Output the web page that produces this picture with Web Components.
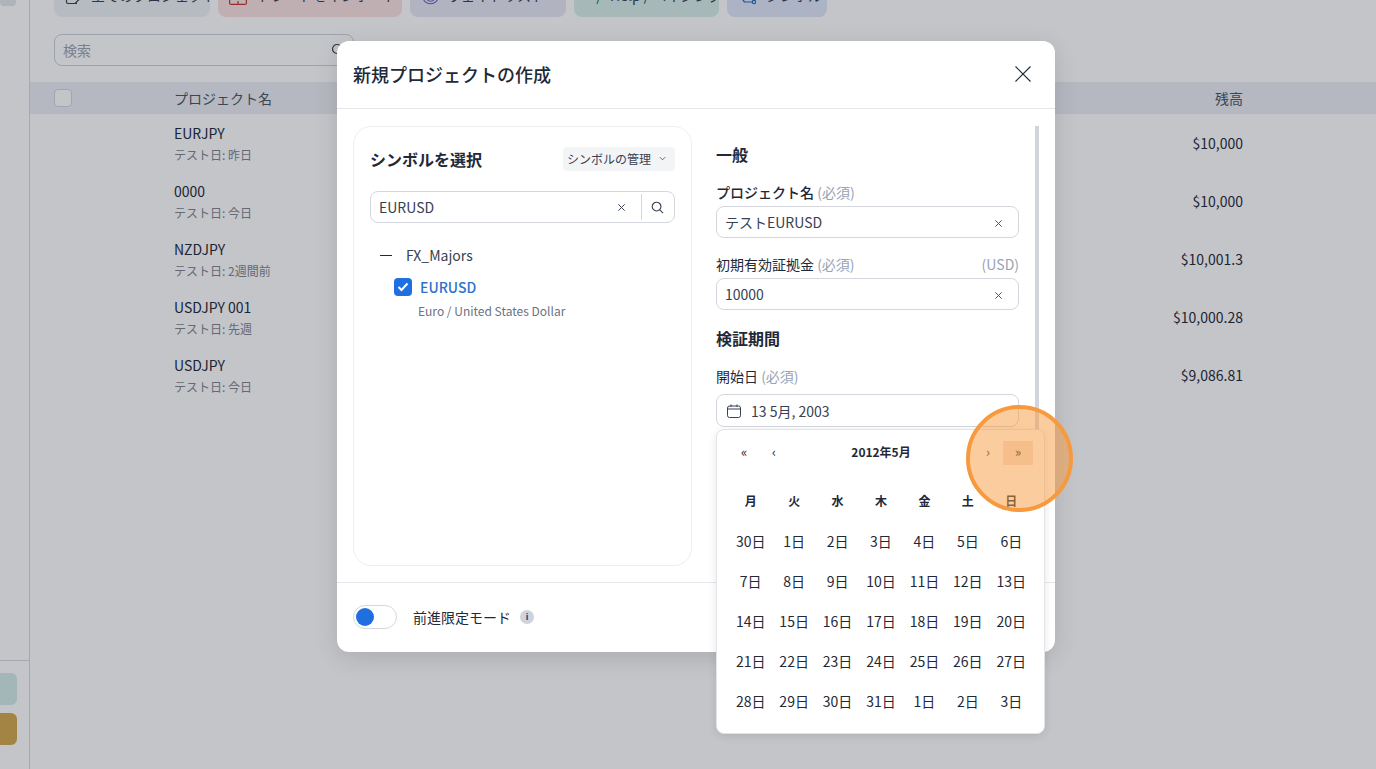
<!DOCTYPE html>
<html lang="ja"><head><meta charset="utf-8">
<style>
html,body{margin:0;padding:0;height:100%;overflow:hidden}
body{font-family:"Noto Sans CJK JP","Noto Sans",sans-serif;color:#1f2937;background:#fff}
</style></head><body>
<app-shell></app-shell>
<script>
const X='<svg viewBox="0 0 10 10" width="9" height="9" fill="none" stroke="currentColor" stroke-width="1.1"><path d="M1.5 1.5l7 7M8.5 1.5l-7 7"/></svg>';
function def(name,html,init){customElements.define(name,class extends HTMLElement{constructor(){super();this.attachShadow({mode:'open'}).innerHTML=typeof html==='function'?html(this):html;}connectedCallback(){init&&init(this);}});}

def('project-row',el=>`<style>:host{display:grid;grid-template-columns:144px 1fr auto;height:58px;padding-right:133px;box-sizing:border-box}
.n{font-size:14px;line-height:20px;color:#1f2937;margin-top:9px}.d{font-size:12px;line-height:18px;color:#808590;margin-top:3px}
.b{font-size:14px;line-height:20px;align-self:start;margin-top:19px;color:#1f2937}</style>
<div></div><div><div class="n">${el.getAttribute('name')}</div><div class="d">テスト日: ${el.getAttribute('date')}</div></div><div class="b">${el.getAttribute('bal')}</div>`);

def('top-button',el=>`<style>:host{display:flex;align-items:flex-end;gap:${el.getAttribute('gap')||8}px;box-sizing:border-box;height:40px;border-radius:0 0 8px 8px;font-size:14px;line-height:20px;color:#374151;padding:0 0 12px ${el.getAttribute('pl')||11}px;white-space:nowrap;overflow:hidden;background:${el.getAttribute('bg')};width:${el.getAttribute('w')}px}
::slotted(svg){display:block;flex:none;margin-bottom:0}</style><slot name="icon"></slot><slot></slot>`);

def('bg-page',`<style>:host{display:flex;height:769px;overflow:hidden}
aside{width:29px;border-right:1px solid #d6d8dc;flex:none;position:relative;display:flex;flex-direction:column;justify-content:flex-end}
.tick{height:6px;width:16px;background:#e5e7eb;border-radius:0 0 4px 4px;position:absolute;top:0;left:0}
.foot{border-top:1px solid #d6d8dc;height:109px;box-sizing:border-box;padding-top:12px;display:flex;flex-direction:column;gap:8px}
.sq{width:17px;height:32px;border-radius:0 6px 6px 0}
main{flex:1;min-width:0}
.btns{display:flex;gap:8px;padding-left:24px;margin-top:-23px}
.search{margin:17px 0 0 24px;width:300px;height:32px;box-sizing:border-box;border:1px solid #cbd0d8;border-radius:8px;display:flex;align-items:center;justify-content:space-between;padding:0 8px;font-size:14px;color:#9ca3af}
.head{margin-top:16px;height:32px;background:#eceef3;display:grid;grid-template-columns:144px 1fr auto;align-items:center;font-size:14px;color:#4b5563;padding-right:133px}
.cb{width:16px;height:16px;border:1px solid #d1d5db;background:#fff;border-radius:4px;margin-left:24px}
svg{display:block}</style>
<aside><div class="tick"></div><div class="foot"><div class="sq" style="background:#d4ecea"></div><div class="sq" style="background:#d6a94f"></div></div></aside>
<main>
<div class="btns">
<top-button bg="#eef0f5" w="156"><svg slot="icon" width="18" height="18" viewBox="0 0 18 18" fill="none" stroke="#374151" stroke-width="1.2"><path d="M12 16.5H3a1.500 1.500 0 0 1-1.500-1.500V3A1.500 1.500 0 0 1 3 1.500h9A1.500 1.500 0 0 1 13.500 3v9"/><path d="M17 9.500l-7 7"/></svg>全てのプロジェクト</top-button>
<top-button bg="#fae2e2" w="184"><svg slot="icon" width="18" height="18" viewBox="0 0 18 18" fill="none" stroke="#c0392b" stroke-width="1.2"><rect x=".6" y=".6" width="16.800" height="16.800" rx="1.500"/><path d="M9 14v3"/></svg><span style="margin-left:2px">トレードをインポート</span></top-button>
<top-button bg="#e9e7f5" w="156" pl="12"><svg slot="icon" width="17" height="18" viewBox="0 0 18 18" fill="none" stroke="#7c5cbf" stroke-width="1.1"><circle cx="9" cy="9" r="8.300"/><circle cx="9" cy="9" r="5.500"/><circle cx="9" cy="9" r="2.800"/></svg>ウェイトリスト</top-button>
<top-button bg="#d9efe8" w="145" pl="22"><svg slot="icon" width="6" height="14" viewBox="0 0 6 14" fill="none" stroke="#2a9d6b" stroke-width="1.3"><path d="M5 1L1 13"/></svg>Help / ペイジング</top-button>
<top-button bg="#dfe7f8" w="100" pl="15" gap="10"><svg slot="icon" width="14" height="14" viewBox="0 0 14 14" fill="none" stroke="#2f6fc9" stroke-width="1.2"><path d="M1 1v7a3 3 0 0 0 3 3h6"/><circle cx="12" cy="11" r="1.700"/></svg>シンボル</top-button>
</div>
<div class="search"><span>検索</span><svg width="14" height="14" viewBox="0 0 14 14" fill="none" stroke="#374151" stroke-width="1.2"><circle cx="6" cy="6" r="4.500"/><path d="M9.500 9.500L13 13"/></svg></div>
<div class="head"><div class="cb"></div><div>プロジェクト名</div><div>残高</div></div>
<div>
<project-row name="EURJPY" date="昨日" bal="$10,000"></project-row>
<project-row name="0000" date="今日" bal="$10,000"></project-row>
<project-row name="NZDJPY" date="2週間前" bal="$10,001.3"></project-row>
<project-row name="USDJPY 001" date="先週" bal="$10,000.28"></project-row>
<project-row name="USDJPY" date="今日" bal="$9,086.81"></project-row>
</div>
</main>`);

def('text-field',el=>`<style>:host{display:flex;align-items:center;box-sizing:border-box;height:32px;border:1px solid #d4d7dd;border-radius:8px;padding:0 15px 1px 8px;font-size:14px;color:#374151;background:#fff}
span{flex:1}.x{color:#4b5563}</style><span><slot></slot></span><div class="x">${X}</div>`);

def('field-label',el=>`<style>:host{display:flex;justify-content:space-between;font-size:14px;line-height:20px;color:#1f2937;margin-bottom:4px}
i{font-style:normal;font-weight:400;color:#98a2b3}</style><div><slot></slot> <i>(必須)</i></div><i>${el.getAttribute('unit')||''}</i>`);

def('symbol-panel',`<style>:host{display:block;width:339px;height:440px;box-sizing:border-box;border:1px solid #eceef1;border-radius:18px;padding:15px 16px}
.top{display:flex;justify-content:space-between;align-items:center;height:34px}
h3{margin:0;font-size:16px;font-weight:700;color:#1f2937;line-height:34px}
.mg{display:flex;align-items:center;gap:8px;background:#f3f4f6;border-radius:4px;height:24px;padding:0 9px 1px 4px;box-sizing:border-box;font-size:12px;color:#374151}
.sf{display:flex;align-items:center;margin-top:15px;height:32px;box-sizing:border-box;border:1px solid #d4d7dd;border-radius:8px;font-size:14px;padding-left:8px;color:#374151}
.sf span{flex:1}.sep{width:1px;height:26px;background:#d4d7dd;margin:0 9px 0 15px}.sf .s{margin-right:10px}
.grp{display:flex;align-items:center;margin:20px 0 0 10px;height:24px;font-size:14px;color:#374151}
.grp b{width:12px;height:1px;background:#1f2937;margin-right:14px}
.it{display:flex;align-items:center;margin:8px 0 0 24px;height:24px;font-size:14px;font-weight:500;color:#2f73c9;gap:8px}
.ck{width:18px;height:18px;border-radius:4px;background:#1f6fe0;display:flex;align-items:center;justify-content:center}
.sub{margin:3px 0 0 48px;font-size:12px;line-height:18px;color:#6b7280}svg{display:block}</style>
<div class="top"><h3>シンボルを選択</h3><div class="mg">シンボルの管理<svg width="7" height="5" viewBox="0 0 8 5" fill="none" stroke="#4b5563" stroke-width="1"><path d="M1 1l3 3 3-3"/></svg></div></div>
<div class="sf"><span>EURUSD</span>${X}<div class="sep"></div><svg class="s" width="13" height="13" viewBox="0 0 14 14" fill="none" stroke="#374151" stroke-width="1.2"><circle cx="6" cy="6" r="4.700"/><path d="M9.500 9.500L13 13"/></svg></div>
<div class="grp"><b></b>FX_Majors</div>
<div class="it"><div class="ck"><svg width="12" height="10" viewBox="0 0 12 10" fill="none" stroke="#fff" stroke-width="2"><path d="M1.500 5l3 3 6-6.500"/></svg></div>EURUSD</div>
<div class="sub">Euro / United States Dollar</div>`);

def('date-popup',`<style>:host{display:block;position:absolute;left:379px;top:388px;width:329px;height:305px;box-sizing:border-box;background:#fff;border:1px solid #e2e4e8;border-radius:8px;box-shadow:0 2px 8px rgba(0,0,0,.1);padding:11px 11px 0 12px;font-size:14px;color:#1f2937}
.nav{display:grid;grid-template-columns:30px 30px 1fr 30px 30px;height:24px;align-items:center;text-align:center;font-size:13px;color:#1f2937}
.nav b{font-size:12px;line-height:22px;height:24px;color:#1f2937;font-weight:700}.nav span{height:24px;line-height:22px}.nav .act{background:#f3e3d6}
.grid{display:grid;grid-template-columns:repeat(7,1fr);margin:15px 0 0 0;text-align:center;grid-template-rows:41px;grid-auto-rows:40px;align-items:center}
.wd{font-weight:700;font-size:12px;align-self:start;line-height:42px}</style>
<div class="nav"><span>«</span><span>‹</span><b>2012年5月</b><span>›</span><span class="act">»</span></div>
<div class="grid" id="g"></div>`,el=>{
 const g=el.shadowRoot.getElementById('g');
 if(g.children.length)return;
 let h='';'月火水木金土日'.split('').forEach(d=>h+=`<div class="wd">${d}</div>`);
 [30,1,2,3,4,5,6,7,8,9,10,11,12,13,14,15,16,17,18,19,20,21,22,23,24,25,26,27,28,29,30,31,1,2,3].forEach(d=>h+=`<div>${d}日</div>`);
 g.innerHTML=h;
});

def('new-project-modal',`<style>:host{display:flex;flex-direction:column;position:absolute;left:337px;top:41px;width:718px;height:611px;background:#fff;border-radius:12px;box-shadow:0 6px 24px rgba(0,0,0,.12);color:#1f2937}
header{display:flex;justify-content:space-between;align-items:center;height:68px;box-sizing:border-box;padding:0 24px 2px 16px;border-bottom:1px solid #e5e7eb;font-size:18px;font-weight:500}
.body{display:flex;height:474px;box-sizing:border-box;padding:17px 0 0 16px;border-bottom:1px solid #e5e7eb;}
.form{width:303px;margin:16px 0 0 24px;box-sizing:border-box}
.bar{width:4px;height:456px;background:#d1d5db;margin-left:16px}
h4{margin:0;font-size:16px;line-height:24px;font-weight:700}
foot{display:flex;align-items:center;flex:1;padding:0 0 2px 16px;font-size:14px}
.tg{width:44px;height:24px;box-sizing:border-box;border:1px solid #d4d7dd;border-radius:12px;display:flex;align-items:center;padding-left:2px;margin-right:16px}
.tg i{width:18px;height:18px;border-radius:50%;background:#1f6fe0}
.inf{width:14px;height:14px;border-radius:50%;background:#cfd3dc;margin-left:9px;color:#374151;font:700 9px/14px "Noto Sans";text-align:center}
svg{display:block}</style>
<header><span>新規プロジェクトの作成</span><svg width="16" height="16" viewBox="0 0 16 16" fill="none" stroke="#1f2937" stroke-width="1.1"><path d="M.5.5l15 15M15.500.5l-15 15"/></svg></header>
<div class="body"><symbol-panel></symbol-panel>
<div class="form">
<h4 style="margin:0 0 16px">一般</h4>
<field-label style="font-weight:500">プロジェクト名</field-label><text-field>テストEURUSD</text-field>
<field-label unit="(USD)" style="margin-top:16px">初期有効証拠金</field-label><text-field>10000</text-field>
<h4 style="margin:16px 0 16px">検証期間</h4>
<field-label style="margin-bottom:8px">開始日</field-label>
<div style="display:flex;align-items:center;height:33px;box-sizing:border-box;border:1px solid #d4d7dd;border-radius:8px;padding-left:10px;gap:10px;font-size:14px;color:#374151"><svg width="14" height="14" viewBox="0 0 14 14" fill="none" stroke="#374151" stroke-width="1"><rect x=".5" y="2" width="13" height="11.500" rx="2"/><path d="M.5 5h13M4 .5v2.500M10 .5v2.500"/></svg>13 5月, 2003</div>
</div><div class="bar"></div></div>
<foot><div class="tg"><i></i></div>前進限定モード<div class="inf">i</div></foot>
<date-popup></date-popup>`);

def('click-marker',`<style>:host{display:block;position:absolute;left:966px;top:405px;width:107px;height:107px;box-sizing:border-box;border:4px solid #f79a3e;border-radius:50%;background:rgba(247,154,62,.5)}</style>`);

def('app-shell',`<style>:host{display:block;position:relative;width:1376px;height:769px;overflow:hidden}
.scrim{position:absolute;inset:0;background:rgba(17,24,39,.25)}</style>
<bg-page></bg-page><div class="scrim"></div><new-project-modal></new-project-modal><click-marker></click-marker>`);
</script>
</body></html>
